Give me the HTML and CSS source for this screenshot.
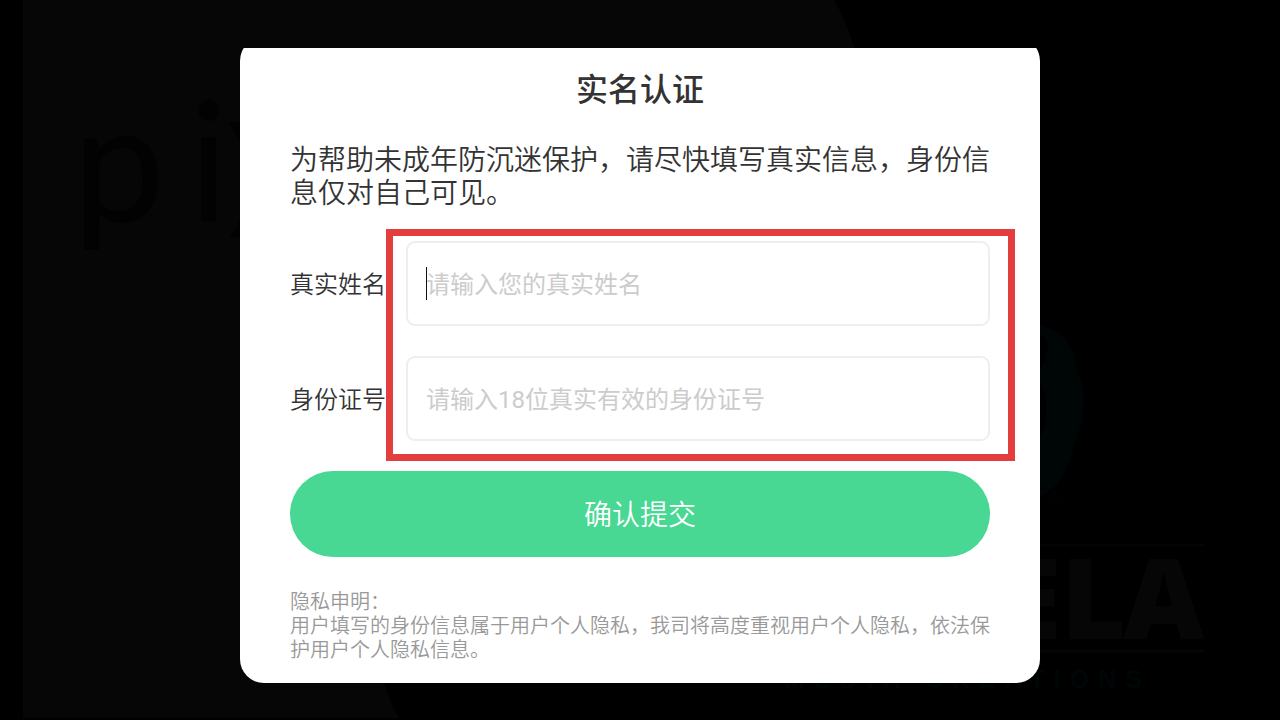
FILE: index.html
```html
<!DOCTYPE html>
<html lang="zh-CN">
<head>
<meta charset="utf-8">
<meta name="viewport" content="width=device-width, initial-scale=1">
<title>实名认证</title>
<link rel="stylesheet" href="styles.css">
</head>
<body>
<svg class="backdrop" viewBox="0 0 1280 720" preserveAspectRatio="xMidYMid slice" aria-hidden="true">
  <path class="panel" d="M23 0H834Q847 22 855 50L860 400L384 683Q390 702 399 718H23Z"/>
  <g class="brand-light">
    <text x="73" y="222">p</text>
    <text x="189" y="221">i</text>
  </g>
  <path class="brand-x" d="M229 122H246L290 180L246 238H230L262 180Z"/>
  <path class="leaf" d="M1030 323C1052 326 1066 335 1072 350C1077 366 1078 374 1083 386C1086 410 1080 430 1073 450C1065 476 1060 486 1041 496L1030 503V450C1050 430 1050 400 1040 382V370C1052 350 1049 336 1040 335H1030Z"/>
  <text class="mark" x="1049" y="505">®</text>
  <path class="rule" d="M900 545H1204M900 651H1204"/>
  <g class="brand-bold">
    <text x="1000" y="639">E</text>
    <text x="1061" y="639">L</text>
    <text x="1123" y="639">A</text>
  </g>
  <text class="tagline" x="784" y="688">MEDIA CREATIONS</text>
</svg>

<main class="stage">
  <form class="dialog" aria-labelledby="title">
    <h1 class="title" id="title">实名认证</h1>
    <p class="intro">为帮助未成年防沉迷保护，请尽快填写真实信息，身份信息仅对自己可见。</p>
    <div class="fields">
      <div class="row">
        <label class="label" for="name">真实姓名</label>
        <div class="control">
          <input class="input" id="name" type="text" placeholder="请输入您的真实姓名">
          <span class="caret"></span>
        </div>
      </div>
      <div class="row">
        <label class="label" for="idno">身份证号</label>
        <div class="control">
          <input class="input" id="idno" type="text" placeholder="请输入18位真实有效的身份证号">
        </div>
      </div>
      <div class="highlight"></div>
    </div>
    <button class="submit" type="button">确认提交</button>
    <p class="notice">隐私申明：<br>用户填写的身份信息属于用户个人隐私，我司将高度重视用户个人隐私，依法保护用户个人隐私信息。</p>
  </form>
</main>
</body>
</html>
```
FILE: styles.css
```css
* {
  box-sizing: border-box;
}

body {
  margin: 0;
  background: #000;
  color: #333;
  font-family: Roboto, "Noto Sans CJK SC", sans-serif;
  font-weight: 350;
}

.backdrop {
  position: fixed;
  inset: 0;
  width: 100%;
  height: 100%;
}

.panel {
  fill: #060606;
}

.brand-light {
  fill: #020202;
  font-family: Lato, sans-serif;
  font-size: 164px;
  font-weight: 400;
}

.brand-x {
  fill: #020204;
}

.leaf {
  fill: #000505;
}

.mark {
  fill: #000505;
  font-family: "Liberation Sans", sans-serif;
  font-size: 20px;
}

.rule {
  stroke: #050505;
  stroke-width: 3;
}

.brand-bold {
  fill: #060606;
  font-family: "Open Sans", sans-serif;
  font-size: 112px;
  font-weight: 800;
}

.tagline {
  fill: #000606;
  font-family: "Liberation Sans", sans-serif;
  font-size: 25px;
  font-weight: 700;
  letter-spacing: 9px;
}

.stage {
  position: relative;
  display: flex;
  align-items: center;
  justify-content: center;
  min-height: 100vh;
}

.dialog {
  display: flex;
  flex-direction: column;
  width: 100%;
  max-width: 800px;
  padding: 29px 50px 21px;
  border-radius: 24px;
  background: #fff;
  clip-path: inset(11px 0 0 0);
}

.title {
  margin: 0 0 30px;
  font-size: 32px;
  font-weight: 500;
  line-height: 48px;
  text-align: center;
}

.intro {
  margin: 0 0 31px;
  font-size: 28px;
  line-height: 33px;
}

.fields {
  position: relative;
  display: flex;
  flex-direction: column;
  gap: 30px;
  margin-bottom: 30px;
}

.row {
  display: flex;
  align-items: center;
  gap: 20px;
}

.label {
  padding-top: 2px;
  font-size: 24px;
  line-height: 36px;
}

.control {
  position: relative;
  flex: 1;
}

.input {
  display: block;
  width: 100%;
  height: 85px;
  padding: 2px 18px 0;
  border: 2px solid #eee;
  border-radius: 9px;
  outline: 0;
  background: #fff;
  color: #333;
  font: inherit;
  font-size: 24px;
  font-weight: 400;
}

.input::placeholder {
  color: #ccc;
  opacity: 1;
}

.caret {
  position: absolute;
  top: 26px;
  left: 20px;
  width: 1px;
  height: 33px;
  background: #111;
}

.highlight {
  position: absolute;
  inset: -12px -25px -20px 96px;
  border: 7px solid #e43d3d;
  pointer-events: none;
}

.submit {
  height: 86px;
  margin-bottom: 33px;
  padding: 0 0 2px;
  border: 0;
  border-radius: 43px;
  background: #48d893;
  color: #fff;
  font: inherit;
  font-size: 28px;
}

.notice {
  margin: 0;
  color: #999;
  font-size: 20px;
  line-height: 24px;
}
```
